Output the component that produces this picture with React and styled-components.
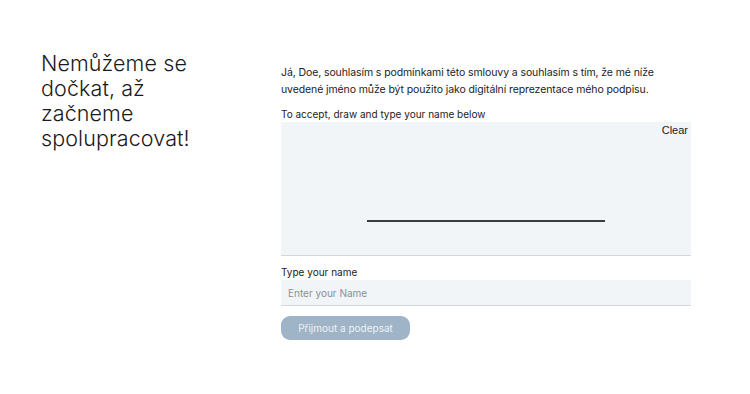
import styled, { createGlobalStyle } from "styled-components"

const Global = createGlobalStyle`
  body {
    margin: 0;
    background: #fff;
    font-family: "Inter", "Noto Sans", sans-serif;
    color: #1d1d1f;
  }
`

const Page = styled.div`
  display: flex;
  padding: 51px 0 0 41px;
  width: 750px;
  height: 394px;
  box-sizing: border-box;
`

const Heading = styled.h1`
  margin: 0 70px 0 0;
  width: 170px;
  font-size: 21.5px;
  line-height: 25px;
  font-weight: 300;
  letter-spacing: 0.1px;
  color: #1a1a1a;
`

const Form = styled.div`
  width: 410px;
  margin-top: 13px;
  display: flex;
  flex-direction: column;
`

const Intro = styled.p`
  margin: 0 0 10px;
  font-size: 10.5px;
  line-height: 17px;
  letter-spacing: -0.1px;
  color: #222;
`

const Label = styled.div`
  font-size: 10px;
  line-height: 12px;
  margin-bottom: 2px;
  color: #222;
`

const Pad = styled.div`
  position: relative;
  height: 133px;
  background: #f2f5f8;
  border-bottom: 1px solid #d3d7dc;
  display: flex;
  justify-content: center;
  margin-bottom: 10px;
`

const Clear = styled.button`
  position: absolute;
  top: 2px;
  right: 3px;
  border: none;
  background: none;
  font-family: "Liberation Sans", Arial, sans-serif;
  font-size: 11px;
  color: #1a1a1a;
  padding: 0;
`

const SignLine = styled.div`
  margin-top: 98px;
  width: 238px;
  height: 2px;
  background: #3a3c40;
`

const Input = styled.input`
  height: 26px;
  box-sizing: border-box;
  background: #f2f5f8;
  border: none;
  border-bottom: 1px solid #d3d7dc;
  padding: 0 7px;
  font-family: inherit;
  font-size: 10px;
  outline: none;
  &::placeholder {
    color: #8a8f96;
  }
`

const Submit = styled.button`
  margin-top: 10px;
  align-self: flex-start;
  width: 129px;
  height: 24px;
  border: none;
  border-radius: 9px;
  background: #a0b4c8;
  color: #eef2f6;
  font-family: inherit;
  font-size: 10px;
`

export default function App() {
  return (
    <>
      <Global />
      <Page>
        <Heading>Nemůžeme se dočkat, až začneme spolupracovat!</Heading>
        <Form>
          <Intro>
            Já, Doe, souhlasím s podmínkami této smlouvy a souhlasím s tím, že mé níže uvedené jméno může být použito jako digitální reprezentace mého podpisu.
          </Intro>
          <Label>To accept, draw and type your name below</Label>
          <Pad>
            <Clear>Clear</Clear>
            <SignLine />
          </Pad>
          <Label>Type your name</Label>
          <Input placeholder="Enter your Name" />
          <Submit>Přijmout a podepsat</Submit>
        </Form>
      </Page>
    </>
  )
}
